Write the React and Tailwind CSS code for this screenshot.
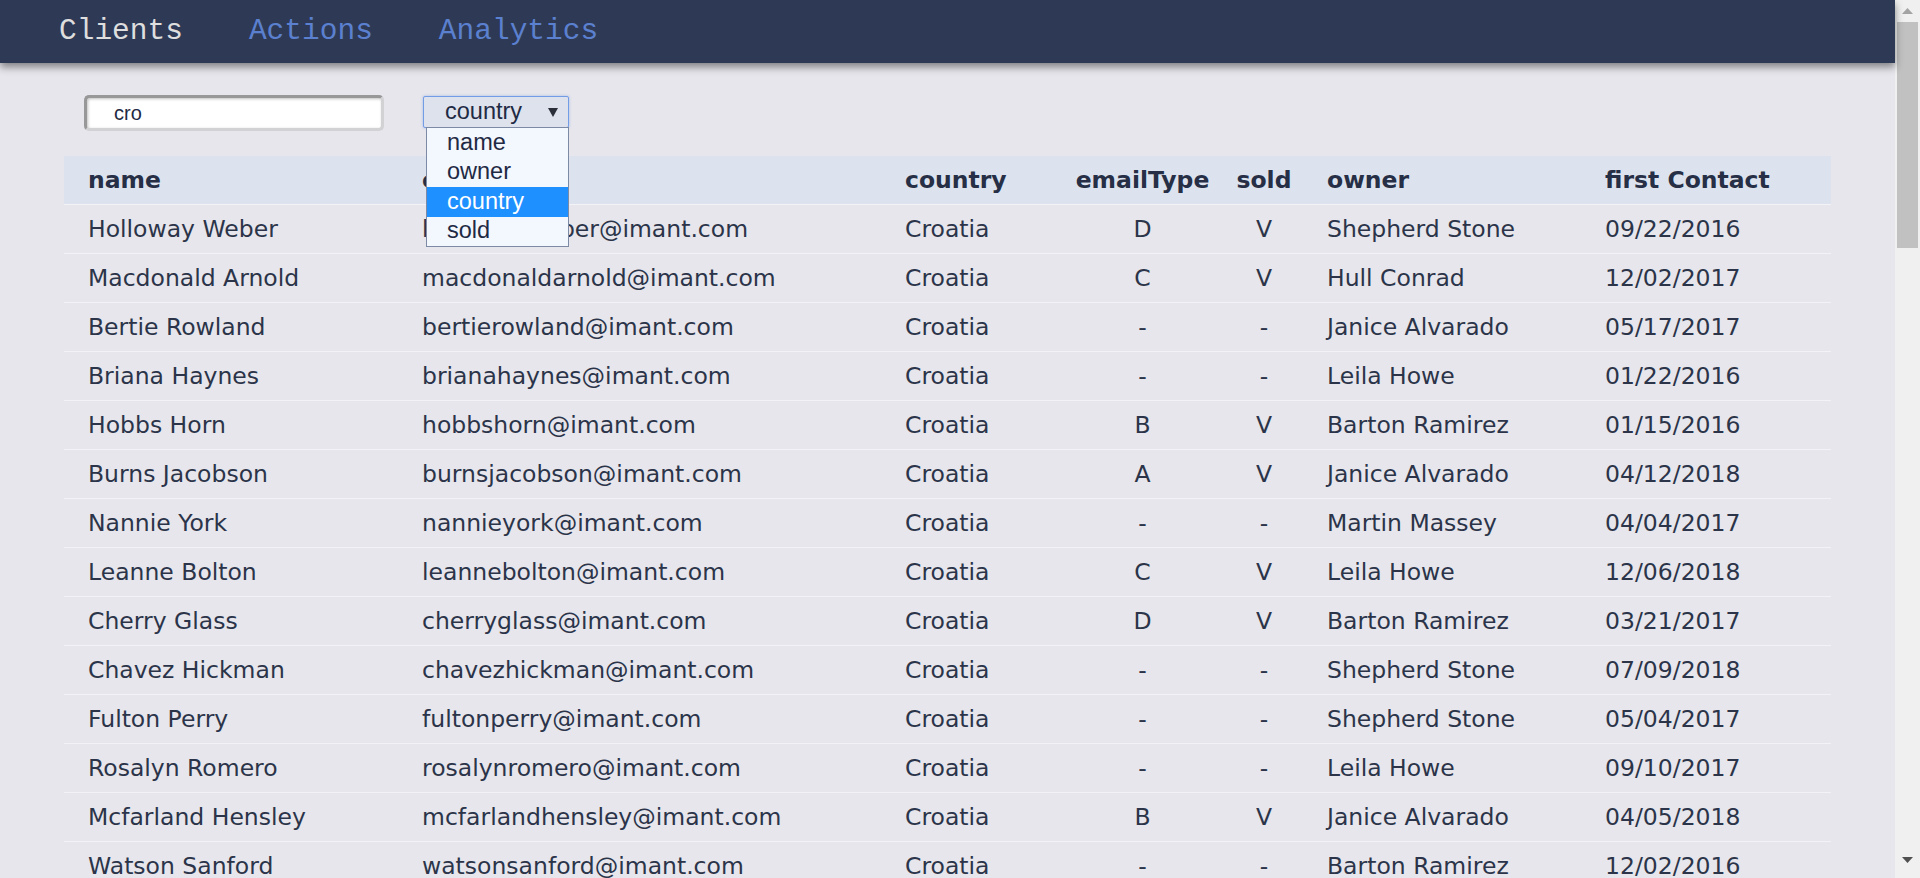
import React from "react";

const rows = [
  ["Holloway Weber", "hollowayweber@imant.com", "Croatia", "D", "V", "Shepherd Stone", "09/22/2016"],
  ["Macdonald Arnold", "macdonaldarnold@imant.com", "Croatia", "C", "V", "Hull Conrad", "12/02/2017"],
  ["Bertie Rowland", "bertierowland@imant.com", "Croatia", "-", "-", "Janice Alvarado", "05/17/2017"],
  ["Briana Haynes", "brianahaynes@imant.com", "Croatia", "-", "-", "Leila Howe", "01/22/2016"],
  ["Hobbs Horn", "hobbshorn@imant.com", "Croatia", "B", "V", "Barton Ramirez", "01/15/2016"],
  ["Burns Jacobson", "burnsjacobson@imant.com", "Croatia", "A", "V", "Janice Alvarado", "04/12/2018"],
  ["Nannie York", "nannieyork@imant.com", "Croatia", "-", "-", "Martin Massey", "04/04/2017"],
  ["Leanne Bolton", "leannebolton@imant.com", "Croatia", "C", "V", "Leila Howe", "12/06/2018"],
  ["Cherry Glass", "cherryglass@imant.com", "Croatia", "D", "V", "Barton Ramirez", "03/21/2017"],
  ["Chavez Hickman", "chavezhickman@imant.com", "Croatia", "-", "-", "Shepherd Stone", "07/09/2018"],
  ["Fulton Perry", "fultonperry@imant.com", "Croatia", "-", "-", "Shepherd Stone", "05/04/2017"],
  ["Rosalyn Romero", "rosalynromero@imant.com", "Croatia", "-", "-", "Leila Howe", "09/10/2017"],
  ["Mcfarland Hensley", "mcfarlandhensley@imant.com", "Croatia", "B", "V", "Janice Alvarado", "04/05/2018"],
  ["Watson Sanford", "watsonsanford@imant.com", "Croatia", "-", "-", "Barton Ramirez", "12/02/2016"],
];

const grid = "grid grid-cols-[334px_483px_179px_165px_78px_278px_249px]";

function Row({ cells, header }) {
  return (
    <div
      className={`${grid} h-[49px] items-center border-b border-[#f3f3f7] pt-[2px] ${
        header ? "bg-[#dde3ee] font-bold text-[#262f46]" : "text-[#2b3449]"
      }`}
    >
      <div className="pl-[24px] whitespace-nowrap">{cells[0]}</div>
      <div className="pl-[24px] whitespace-nowrap">{cells[1]}</div>
      <div className="pl-[24px] whitespace-nowrap">{cells[2]}</div>
      <div className="text-center whitespace-nowrap">{cells[3]}</div>
      <div className="text-center whitespace-nowrap">{cells[4]}</div>
      <div className="pl-[24px] whitespace-nowrap">{cells[5]}</div>
      <div className="pl-[24px] whitespace-nowrap">{cells[6]}</div>
    </div>
  );
}

export default function App() {
  return (
    <div className="flex h-[878px] w-[1920px] overflow-hidden bg-[#e7e6ec]">
      <div className="flex min-w-0 flex-1 flex-col">
        <nav className="relative z-10 flex h-[63px] shrink-0 items-center gap-[66px] bg-[#2e3a55] pl-[59px] text-[29.5px] shadow-[0_4px_8px_rgba(0,0,0,0.45)] [font-family:'Liberation_Mono',monospace]">
          <span className="text-[#dedede]">Clients</span>
          <span className="text-[#5b80cf]">Actions</span>
          <span className="text-[#5b80cf]">Analytics</span>
        </nav>

        <div className="px-[64px] [font-family:'DejaVu_Sans',sans-serif] text-[23.5px]">
          <div className="mt-[32px] flex h-[36px] items-start pl-[20px] [font-family:'Liberation_Sans',Arial,sans-serif]">
            <div className="flex h-[36px] w-[300px] items-center rounded-[5px] border-[3px] border-t-[#989898] border-l-[#989898] border-b-[#d2d2d4] border-r-[#d2d2d4] bg-white pl-[27px] text-[20px] text-[#1f2a44] shadow-[inset_1px_1px_3px_rgba(0,0,0,0.25)]">
              cro
            </div>
            <div className="relative ml-[39px] mt-[1px]">
              <div className="flex h-[32px] w-[146px] items-center justify-between rounded-[2px] border-[1.5px] border-[#739ce6] bg-[#dde2ed] pl-[21px] pr-[10px] text-[23.5px] text-[#1f2a44] shadow-[0_0_3px_rgba(90,130,220,0.45)]">
                <span className="leading-none">country</span>
                <svg width="10" height="9" viewBox="0 0 10 9" className="mt-[1px]">
                  <polygon points="0,0 10,0 5,9" fill="#2b2f3a" />
                </svg>
              </div>
              <div className="absolute left-[3px] top-[31px] z-20 w-[143px] border border-[#7d8aa6] bg-[#f3f7fe] text-[23.5px] text-[#1f2a44]">
                <div className="flex h-[29.5px] items-center pb-[1px] pl-[20px]">name</div>
                <div className="flex h-[29.5px] items-center pb-[1px] pl-[20px]">owner</div>
                <div className="flex h-[29.5px] items-center bg-[#1e90ff] pb-[1px] pl-[20px] text-white">country</div>
                <div className="flex h-[29.5px] items-center pb-[1px] pl-[20px]">sold</div>
              </div>
            </div>
          </div>

          <div className="mt-[25px]">
            <Row header cells={["name", "email", "country", "emailType", "sold", "owner", "first Contact"]} />
            {rows.map((r, i) => (
              <Row key={i} cells={r} />
            ))}
          </div>
        </div>
      </div>

      <div className="flex w-[25px] shrink-0 flex-col bg-[#f0f0f0]">
        <div className="flex h-[22px] items-center justify-center">
          <svg width="11" height="6" viewBox="0 0 11 6">
            <polygon points="0,6 11,6 5.5,0" fill="#a3a3a3" />
          </svg>
        </div>
        <div className="mx-[2px] h-[226px] bg-[#c1c1c1]" />
        <div className="flex-1" />
        <div className="flex h-[24px] items-start justify-center pt-[3px]">
          <svg width="11" height="6" viewBox="0 0 11 6">
            <polygon points="0,0 11,0 5.5,6" fill="#505050" />
          </svg>
        </div>
      </div>
    </div>
  );
}
